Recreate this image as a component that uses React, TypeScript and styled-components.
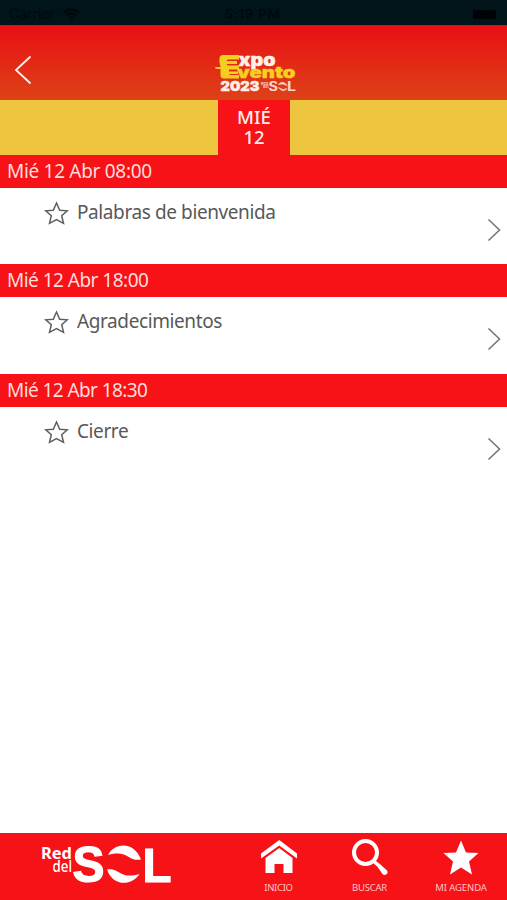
import React from "react";
import styled, { createGlobalStyle } from "styled-components";

const RED = "#f71217";
const YELLOW = "#edc53f";

const GlobalStyle = createGlobalStyle`
  * { box-sizing: border-box; }
  body { margin: 0; background: #fff; }
`;

const Screen = styled.div`
  width: 507px;
  height: 900px;
  display: flex;
  flex-direction: column;
  overflow: hidden;
  background: #fff;
  font-family: "Noto Sans", sans-serif;
`;

const StatusBar = styled.div`
  height: 25px;
  flex: none;
  display: grid;
  grid-template-columns: 1fr auto 1fr;
  align-items: center;
  padding: 3px 11px 0 9px;
  background: #001419;
  color: #00090d;
  font: 14px/20px Inter, sans-serif;
`;

const Carrier = styled.span`
  display: flex;
  align-items: center;
  gap: 8px;
`;

const Clock = styled.span`
  font-weight: 600;
  font-size: 13.5px;
  letter-spacing: 0.65px;
`;

const Battery = styled.span`
  justify-self: end;
  width: 23px;
  height: 9px;
  border-radius: 2px;
  background: #000305;
`;

const Header = styled.header`
  height: 75px;
  flex: none;
  display: grid;
  grid-template-columns: 60px 1fr 60px;
  background: linear-gradient(#e90f14, #dd4217);
`;

const BackButton = styled.button`
  border: 0;
  padding: 30px 0 0 14px;
  background: none;
  display: flex;
  align-items: flex-start;
`;

const EventLogo = styled.svg`
  justify-self: center;
  margin: 26px 0 0 4px;
  overflow: visible;
`;

const DayBand = styled.nav`
  height: 55px;
  flex: none;
  display: flex;
  padding-left: 218px;
  background: ${YELLOW};
`;

const DayTab = styled.button`
  width: 72px;
  border: 0;
  padding: 0 0 2px;
  background: ${RED};
  color: #ffeceb;
  font: 500 18.5px/19.5px "Noto Sans", sans-serif;
  text-align: center;
`;

const DayLine = styled.span`
  display: block;
`;

const Agenda = styled.main`
  flex: 1;
`;

const Slot = styled.section`
  height: 109.3px;
`;

const SlotTime = styled.h2<{ $spacing: number }>`
  margin: 0;
  height: 33px;
  padding-left: 7px;
  background: ${RED};
  color: #ffdcda;
  font-size: 19px;
  font-weight: 400;
  line-height: 32px;
  letter-spacing: ${(p) => p.$spacing}px;
  white-space: nowrap;
`;

const SlotBody = styled.div`
  height: 76px;
  display: flex;
  align-items: flex-start;
  padding: 10px 6px 0 44px;
  color: #585858;
`;

const StarIcon = styled.svg`
  flex: none;
  margin: 3px 8px 0 0;
`;

const Title = styled.span<{ $spacing: number }>`
  flex: 1;
  font-size: 19px;
  line-height: 29px;
  letter-spacing: ${(p) => p.$spacing}px;
  white-space: nowrap;
`;

const Chevron = styled.svg`
  flex: none;
  margin-top: 20px;
`;

const Footer = styled.footer`
  height: 67px;
  flex: none;
  display: grid;
  grid-template-columns: 233px 91px 91px 92px;
  background: ${RED};
`;

const BrandLogo = styled.svg`
  display: block;
  margin-left: 38px;
`;

const FooterItem = styled.button`
  border: 0;
  padding: 0;
  background: none;
  display: flex;
  flex-direction: column;
  align-items: center;
  justify-content: flex-start;
  color: #ffc5c2;
  font: 9.5px/12px "Noto Sans", sans-serif;
`;

const FooterIcon = styled.svg`
  display: block;
  margin: 5px 0 6px;
`;

const FooterLabel = styled.span<{ $spacing: number }>`
  letter-spacing: ${(p) => p.$spacing}px;
  white-space: nowrap;
`;

const slots = [
  { time: "Mié 12 Abr 08:00", title: "Palabras de bienvenida", ts: -0.3, ns: -0.4 },
  { time: "Mié 12 Abr 18:00", title: "Agradecimientos", ts: -0.52, ns: -0.4 },
  { time: "Mié 12 Abr 18:30", title: "Cierre", ts: -0.58, ns: -0.4 },
];

export default function App() {
  return (
    <Screen>
      <GlobalStyle />
      <StatusBar>
        <Carrier>
          Carrier
          <svg width="17" height="13" viewBox="0 0 17 13" fill="none" stroke="currentColor" strokeWidth="2.3">
            <path d="M1 4.5Q8.5-1.5 16 4.5M3.5 7.5Q8.5 3.5 13.5 7.5" />
            <path d="M5.8 9.5Q8.5 7.5 11.2 9.5L8.5 12.5Z" fill="currentColor" stroke="none" />
          </svg>
        </Carrier>
        <Clock>5:19 PM</Clock>
        <Battery />
      </StatusBar>
      <Header>
        <BackButton aria-label="Atrás">
          <svg width="18" height="30" viewBox="0 0 18 30" fill="none" stroke="#fff3ee" strokeWidth="1.8">
            <path d="M16.5 1.5L2 15L16.5 28.5" />
          </svg>
        </BackButton>
        <EventLogo width="84" height="44" viewBox="214 51 84 44">
          <g fontFamily="Inter" fontWeight="900">
            <text x="238.5" y="65.5" fontSize="17" textLength="37" lengthAdjust="spacingAndGlyphs" fill="#fff0e7" stroke="#fff0e7" strokeWidth=".4">xpo</text>
            <text x="237" y="77.5" fontSize="16" textLength="58.500" lengthAdjust="spacingAndGlyphs" fill="#f5cf20" stroke="#f5cf20" strokeWidth=".4">vento</text>
            <text x="220.5" y="91" fontSize="13.800" textLength="39" lengthAdjust="spacingAndGlyphs" fill="#fff0e7" stroke="#fff0e7" strokeWidth=".4">2023</text>
          </g>
          <path d="M223 55H239V59.500H228.500Q226.500 59.500 226.500 61H237V64H226.500Q227 65.500 229 65.500H239V69.500H229V71.500H238V74H229Q229 75 231 75H239V78.500H224Q220.500 78.500 220.500 75V69H217Q215 69 215 67H221Q219.500 65 219.500 62V58.500Q219.500 55 223 55Z" fill="#f5cf20" />
          <g fill="#fbd9d0" fontFamily="Inter" fontWeight="700">
            <text x="261" y="84.500" fontSize="3.800">Red</text>
            <text x="263" y="88" fontSize="3.800">del</text>
            <text x="268.500" y="91" fontSize="12.500" textLength="9.500" lengthAdjust="spacingAndGlyphs">S</text>
            <text x="287" y="91" fontSize="12.500" textLength="9" lengthAdjust="spacingAndGlyphs">L</text>
            <path d="M278.500 84.500Q283 79.500 287 85.500Q283 83 278.500 84.500ZM278.500 87.500Q283 91 287 88.500Q283 93.500 278.500 87.500Z" stroke="#fbd9d0" strokeWidth=".6" />
          </g>
        </EventLogo>
      </Header>
      <DayBand>
        <DayTab>
          <DayLine>MIÉ</DayLine>
          <DayLine>12</DayLine>
        </DayTab>
      </DayBand>
      <Agenda>
        {slots.map((s) => (
          <Slot key={s.time}>
            <SlotTime $spacing={s.ts}>{s.time}</SlotTime>
            <SlotBody>
              <StarIcon width="25" height="25" viewBox="0 0 25 25" fill="none" stroke="#5e5e5e" strokeWidth="1.5">
                <path d="M12.500 2L15.700 9.300L23.300 9.800L17.700 14.800L19.500 22.300L12.500 18.600L5.500 22.300L7.300 14.800L1.700 9.800L9.300 9.300Z" />
              </StarIcon>
              <Title $spacing={s.ns}>{s.title}</Title>
              <Chevron width="14" height="24" viewBox="0 0 14 24" fill="none" stroke="#777" strokeWidth="1.6">
                <path d="M1.500 1.500L12.500 12L1.500 22.500" />
              </Chevron>
            </SlotBody>
          </Slot>
        ))}
      </Agenda>
      <Footer>
        <BrandLogo width="136" height="67" viewBox="38 833 136 67" fill="#fff">
          <g fontFamily="Noto Sans">
            <text x="41" y="858.500" fontSize="16.500" fontWeight="700" textLength="31" lengthAdjust="spacingAndGlyphs">Red</text>
            <text x="52.500" y="871.500" fontSize="16" fontWeight="500" textLength="19.500" lengthAdjust="spacingAndGlyphs">del</text>
          </g>
          <g fontFamily="Liberation Sans" fontWeight="700" stroke="#fff" strokeWidth="1.200">
            <text x="72.500" y="882" fontSize="50" textLength="32" lengthAdjust="spacingAndGlyphs">S</text>
            <text x="142.500" y="881.500" fontSize="49" textLength="29" lengthAdjust="spacingAndGlyphs">L</text>
          </g>
          <path d="M108 855C113 844 133 839 141 859.500C128 862 128 849 108 855Z" />
          <path d="M107 869.500C119 867 120 880 139.500 874C132 886 113 887 107 869.500Z" />
        </BrandLogo>
        <FooterItem>
          <FooterIcon width="38" height="38" viewBox="0 0 38 38" fill="#fff">
            <path d="M19.200 2L37 15.500V20.500L19.200 7.500L1 20.500V15.500Z" />
            <path d="M19.200 10L32.500 20V35H23.500V26H14.500V35H5.500V20Z" />
          </FooterIcon>
          <FooterLabel $spacing={-0.3}>INICIO</FooterLabel>
        </FooterItem>
        <FooterItem>
          <FooterIcon width="38" height="38" viewBox="0 0 38 38">
            <circle cx="14.500" cy="14.500" r="11.500" fill="none" stroke="#fff" strokeWidth="4" />
            <path d="M22 22.500L27 27" stroke="#fff" strokeWidth="3.500" />
            <path d="M25.500 27.500L28 25.300L36 32.500Q37.500 35 35 36.500Q33 37.500 31.500 36Z" fill="#fff" />
          </FooterIcon>
          <FooterLabel $spacing={-0.2}>BUSCAR</FooterLabel>
        </FooterItem>
        <FooterItem>
          <FooterIcon width="38" height="38" viewBox="0 0 38 38" fill="#fff">
            <path d="M19 2.500L24 14.500L36.500 15L27 23.500L30 36.500L19 29.500L8 36.500L11 23.500L1.500 15L14 14.500Z" />
          </FooterIcon>
          <FooterLabel $spacing={-0.1}>MI AGENDA</FooterLabel>
        </FooterItem>
      </Footer>
    </Screen>
  );
}
